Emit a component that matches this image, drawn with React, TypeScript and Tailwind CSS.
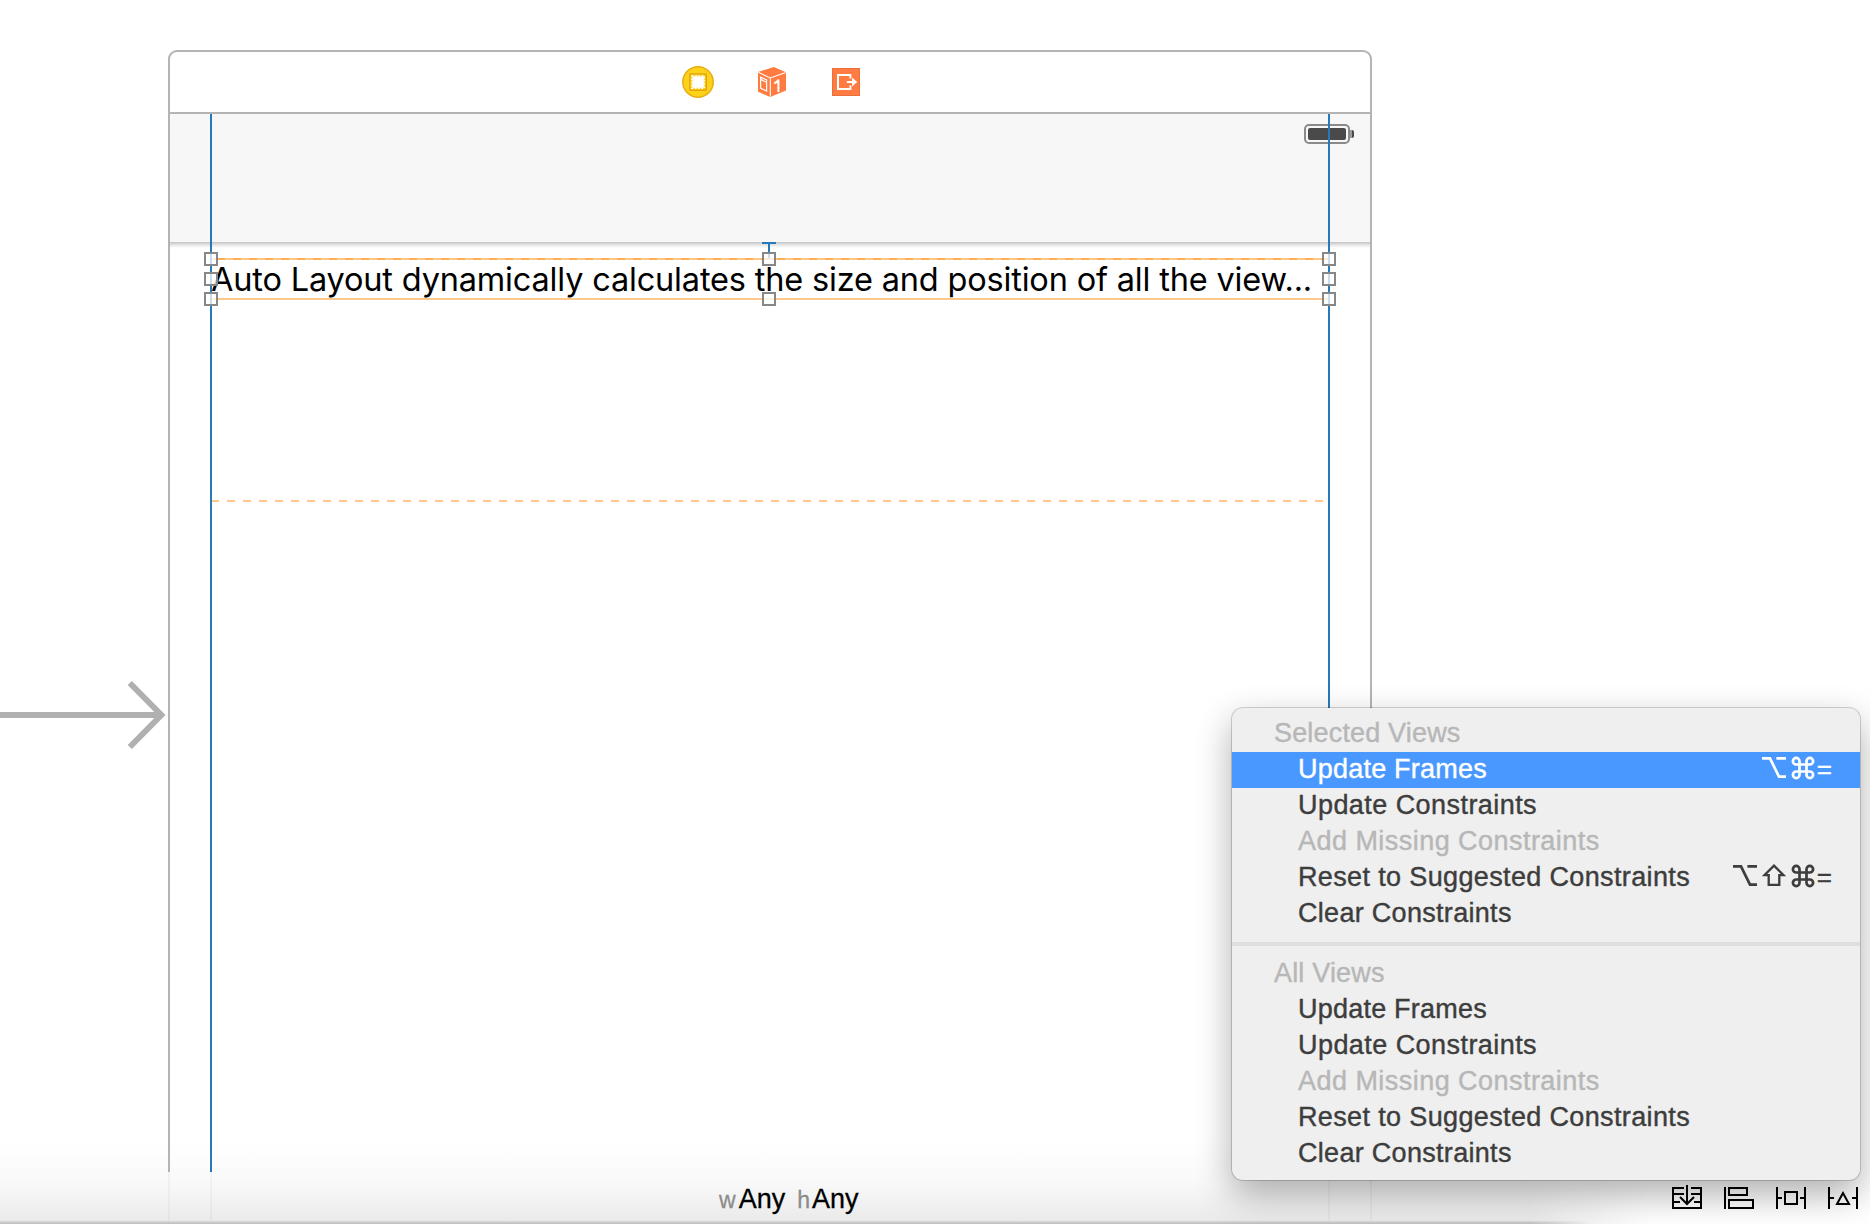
import React from "react";

type KeyName = "option" | "shift" | "command";
type Item = { label: string; tracking: string; disabled?: boolean; active?: boolean; keys?: KeyName[] };

const selectedItems: Item[] = [
  { label: "Update Frames", tracking: "tracking-[0.22px]", active: true, keys: ["option", "command"] },
  { label: "Update Constraints", tracking: "tracking-[0.44px]" },
  { label: "Add Missing Constraints", tracking: "tracking-[0.46px]", disabled: true },
  { label: "Reset to Suggested Constraints", tracking: "tracking-[0.36px]", keys: ["option", "shift", "command"] },
  { label: "Clear Constraints", tracking: "tracking-[0.3px]" },
];

const allItems: Item[] = selectedItems.map((i) => ({ ...i, active: false, keys: undefined }));

function KeyIcon({ name }: { name: KeyName }) {
  return (
    <svg className="h-6 w-6" viewBox="0 0 24 24" fill="none" stroke="currentColor" strokeWidth="2.7">
      {name === "option" && <path d="M0 2.4H8L17 20.7H24M14.4 2.4H24" />}
      {name === "shift" && <path d="M12 1.6L21.6 11.2H17.3V20.8H6.7V11.2H2.4Z" strokeWidth="2.3" />}
      {name === "command" && (
        <path d="M8.5 8.5H5.2A3.3 3.3 0 1 1 8.5 5.2V18.8A3.3 3.3 0 1 1 5.2 15.5H18.8A3.3 3.3 0 1 1 15.5 18.8V5.2A3.3 3.3 0 1 1 18.8 8.5Z" />
      )}
    </svg>
  );
}

function MenuRow({ item }: { item: Item }) {
  const tone = item.active ? "bg-[#4898ff] text-white" : item.disabled ? "text-[#b7b7b7]" : "text-[#3d3d3d]";
  return (
    <li className={`flex h-9 items-start justify-between pr-[28px] pl-[66px] ${tone}`}>
      <span className={`-mt-px text-[27px] leading-9 [-webkit-text-stroke:0.4px] ${item.tracking}`}>{item.label}</span>
      {item.keys && (
        <span className="flex items-start">
          <span className="mt-1 flex gap-[5px]">
            {item.keys.map((k) => (
              <KeyIcon key={k} name={k} />
            ))}
          </span>
          <span className="-mt-px ml-[2px] text-[26px] leading-9 [-webkit-text-stroke:0.4px]">=</span>
        </span>
      )}
    </li>
  );
}

function MenuGroup({ title, items }: { title: string; items: Item[] }) {
  return (
    <section>
      <h2 className="h-9 pl-[42px] text-[27px] leading-[34px] tracking-[0.17px] text-[#b7b7b7] [-webkit-text-stroke:0.4px]">
        {title}
      </h2>
      <ul>
        {items.map((i) => (
          <MenuRow key={i.label} item={i} />
        ))}
      </ul>
    </section>
  );
}

function ContextMenu() {
  return (
    <div className="absolute top-[708px] left-[1232px] z-20 w-[628px] overflow-hidden rounded-[11px] bg-[#efefef] py-2 shadow-[0_0_0_1px_rgba(0,0,0,0.17),0_14px_36px_rgba(0,0,0,0.32)]">
      <MenuGroup title="Selected Views" items={selectedItems} />
      <div className="my-[10px] h-1 bg-[#dedede]" />
      <MenuGroup title="All Views" items={allItems} />
    </div>
  );
}

function ViewControllerIcon() {
  return (
    <svg className="h-8 w-8" viewBox="0 0 32 32">
      <circle cx="16" cy="16" r="15.2" fill="#ffd21a" stroke="#e6ad14" strokeWidth="1.5" />
      <rect x="7.8" y="7.8" width="16.6" height="16.6" rx="0.6" fill="#fccb18" stroke="#dea412" strokeWidth="1.2" />
      <rect x="10.4" y="10.4" width="11.4" height="11.4" fill="#fff" />
      <rect x="10" y="10" width="12.2" height="12.2" fill="none" stroke="#fff" strokeWidth="1.6" strokeDasharray="1.8 1.4" />
    </svg>
  );
}

function FirstResponderIcon() {
  return (
    <svg className="h-[30px] w-7" viewBox="0 0 28 30">
      <path d="M15.8 0L28 5.2V23.5L12.3 30L0 24.8V5Z" fill="#ff7b42" />
      <path d="M0.3 5.3L12.3 11L27.7 5.6M12.3 11V29.6" fill="none" stroke="#fff" strokeWidth="1.1" />
      <path d="M2.6 10.2L8.6 13V24L2.6 21.2ZM2.6 12.4L8.6 15.2" fill="none" stroke="#fff" strokeWidth="1.2" />
      <path d="M16.2 16.4Q19 15.4 20.4 12.6V25" fill="none" stroke="#fff" strokeWidth="2" />
    </svg>
  );
}

function ExitIcon() {
  return (
    <svg className="h-7 w-7" viewBox="0 0 28 28">
      <rect x="0.5" y="0.5" width="27" height="27" fill="#ff7b42" stroke="#e8703c" />
      <path d="M18.4 10.6V6.9H6V21H18.4V17.4M14.8 14H22" fill="none" stroke="#fff" strokeWidth="2" />
      <path d="M20 9.6L25.2 14L20 18.4Z" fill="#fff" />
    </svg>
  );
}

function Battery() {
  return (
    <div className="mr-4 flex h-5 items-center">
      <div className="h-5 w-[46px] rounded-[5px] border-2 border-[#8a8a8a] bg-[#f7f7f7] p-[2px]">
        <div className="h-3 rounded-[2px] bg-[#4a4a4a]" />
      </div>
      <div className="h-2 w-1 rounded-r-[2px] border-l-2 border-[#9a9a9a] bg-[#4a4a4a]" />
    </div>
  );
}

const handleClasses = [
  "top-[252px] left-[204px]",
  "top-[272px] left-[204px]",
  "top-[292px] left-[204px]",
  "top-[252px] left-[762px]",
  "top-[292px] left-[762px]",
  "top-[252px] left-[1322px]",
  "top-[272px] left-[1322px]",
  "top-[292px] left-[1322px]",
];

function Guides() {
  return (
    <>
      <div className="absolute top-[258px] left-[212px] h-[2px] w-[1116px] bg-[#ffc88a]" />
      <div className="absolute top-[258px] left-[212px] h-[2px] w-[1116px] bg-[repeating-linear-gradient(90deg,transparent_0_5px,#ffad52_5px_13px,transparent_13px_16px)]" />
      <div className="absolute top-[298px] left-[212px] h-[2px] w-[1116px] bg-[#ffc88a]" />
      <div className="absolute top-[500px] left-[212px] h-[2px] w-[1116px] bg-[repeating-linear-gradient(90deg,#ffc88a_0_7px,transparent_7px_15px,#ffc88a_15px_16px)]" />
      <div className="absolute top-[114px] left-[210px] h-[1058px] w-[2px] bg-[#2679bb]" />
      <div className="absolute top-[114px] left-[1328px] h-[1058px] w-[2px] bg-[#2679bb]" />
      <div className="absolute top-[242px] left-[762px] h-[2px] w-[14px] bg-[#2679bb]" />
      <div className="absolute top-[242px] left-[768px] h-[16px] w-[2px] bg-[#2679bb]" />
      {handleClasses.map((c) => (
        <div key={c} className={`absolute h-[14px] w-[14px] border-2 border-[#878787] bg-white/75 ${c}`} />
      ))}
    </>
  );
}

function EntryArrow() {
  return (
    <svg className="absolute top-[675px] left-0 h-20 w-[168px]" viewBox="0 0 168 80" fill="none" stroke="#b0b0b0" strokeWidth="6">
      <path d="M0 40H160M129.8 8L161.3 40L129.8 72" />
    </svg>
  );
}

function LayoutTools() {
  return (
    <div className="flex gap-[22px] text-black">
      <svg className="h-6 w-[30px]" viewBox="0 0 30 24" fill="none" stroke="currentColor" strokeWidth="2">
        <path d="M12 3H1V23H29V3H19M1 9H12M19 9H29M1 17H8M22 17H29M15 0V19" />
        <path d="M8 12L15 19L22 12" />
      </svg>
      <svg className="h-6 w-[30px]" viewBox="0 0 30 24" fill="none" stroke="currentColor" strokeWidth="2">
        <path d="M1 2V24M5 3H23V10H5ZM5 15H29V23H5Z" />
      </svg>
      <svg className="h-6 w-[30px]" viewBox="0 0 30 24" fill="none" stroke="currentColor" strokeWidth="2">
        <path d="M1 2V24M29 2V24M1 13H6M24 13H29M9 7H21V19H9Z" />
      </svg>
      <svg className="h-6 w-[30px]" viewBox="0 0 30 24" fill="none" stroke="currentColor" strokeWidth="2">
        <path d="M1 2V24M29 2V24M1 13H6M24 13H29M15 8L9 19H21Z" />
      </svg>
    </div>
  );
}

export default function App() {
  return (
    <div className="relative flex h-[1224px] w-[1870px] flex-col overflow-hidden bg-white font-['Liberation_Sans',sans-serif]">
      <main className="relative z-10 h-[1172px] shrink-0 pt-[50px] pl-[168px]">
        <div className="flex h-[1122px] w-[1204px] flex-col rounded-t-[9px] border-2 border-b-0 border-[#b4b4b4]">
          <div className="flex h-[62px] shrink-0 items-center justify-center border-b-2 border-[#b4b4b4]">
            <div className="ml-[2px] flex items-center gap-11">
              <ViewControllerIcon />
              <FirstResponderIcon />
              <div className="ml-[2px]">
                <ExitIcon />
              </div>
            </div>
          </div>
          <div className="flex h-[128px] shrink-0 justify-end bg-[#f7f7f7] pt-[10px]">
            <Battery />
          </div>
          <div className="h-[6px] shrink-0 bg-linear-to-b from-[#c4c4c4] via-[#e6e6e6] to-white" />
          <p className="mt-[11px] pl-[41px] font-['Inter',sans-serif] text-[32.5px] leading-[42px] tracking-[-0.175px] whitespace-nowrap text-black">
            Auto Layout dynamically calculates the size and position of all the view...
          </p>
        </div>
        <Guides />
        <EntryArrow />
      </main>
      <footer className="relative -mt-[32px] flex h-[84px] shrink-0 items-end justify-between pr-3 pl-[719px]">
        <div className="absolute inset-0 bg-linear-to-b from-white via-[#f9f9f9] to-[#e9e9e9] [mask-image:linear-gradient(90deg,#000_1530px,transparent_1650px)]" />
        <div className="absolute top-[32px] left-[168px] h-[50px] w-[1204px] border-x-2 border-[#9aa4ac]/10" />
        <div className="absolute top-[32px] left-[210px] h-[50px] w-[1120px] border-x-2 border-[#2679bb]/5" />
        <div className="absolute bottom-0 left-0 h-[3px] w-[1600px] bg-linear-to-b from-[#dadada] to-[#bdbdbd] [mask-image:linear-gradient(90deg,#000_1530px,transparent_1590px)]" />
        <div className="relative z-30 flex items-baseline pb-[6px] text-[27px] leading-9 text-black [-webkit-text-stroke:0.3px]">
          <span className="text-[23px] text-[#8c8c8c]">w</span>
          <span className="ml-[3px]">Any</span>
          <span className="ml-[12px] text-[23px] text-[#8c8c8c]">h</span>
          <span className="ml-[2px]">Any</span>
        </div>
      </footer>
      <ContextMenu />
      <div className="relative z-30 -mt-[39px] flex h-[39px] shrink-0 items-start justify-end pr-3">
        <LayoutTools />
      </div>
    </div>
  );
}
